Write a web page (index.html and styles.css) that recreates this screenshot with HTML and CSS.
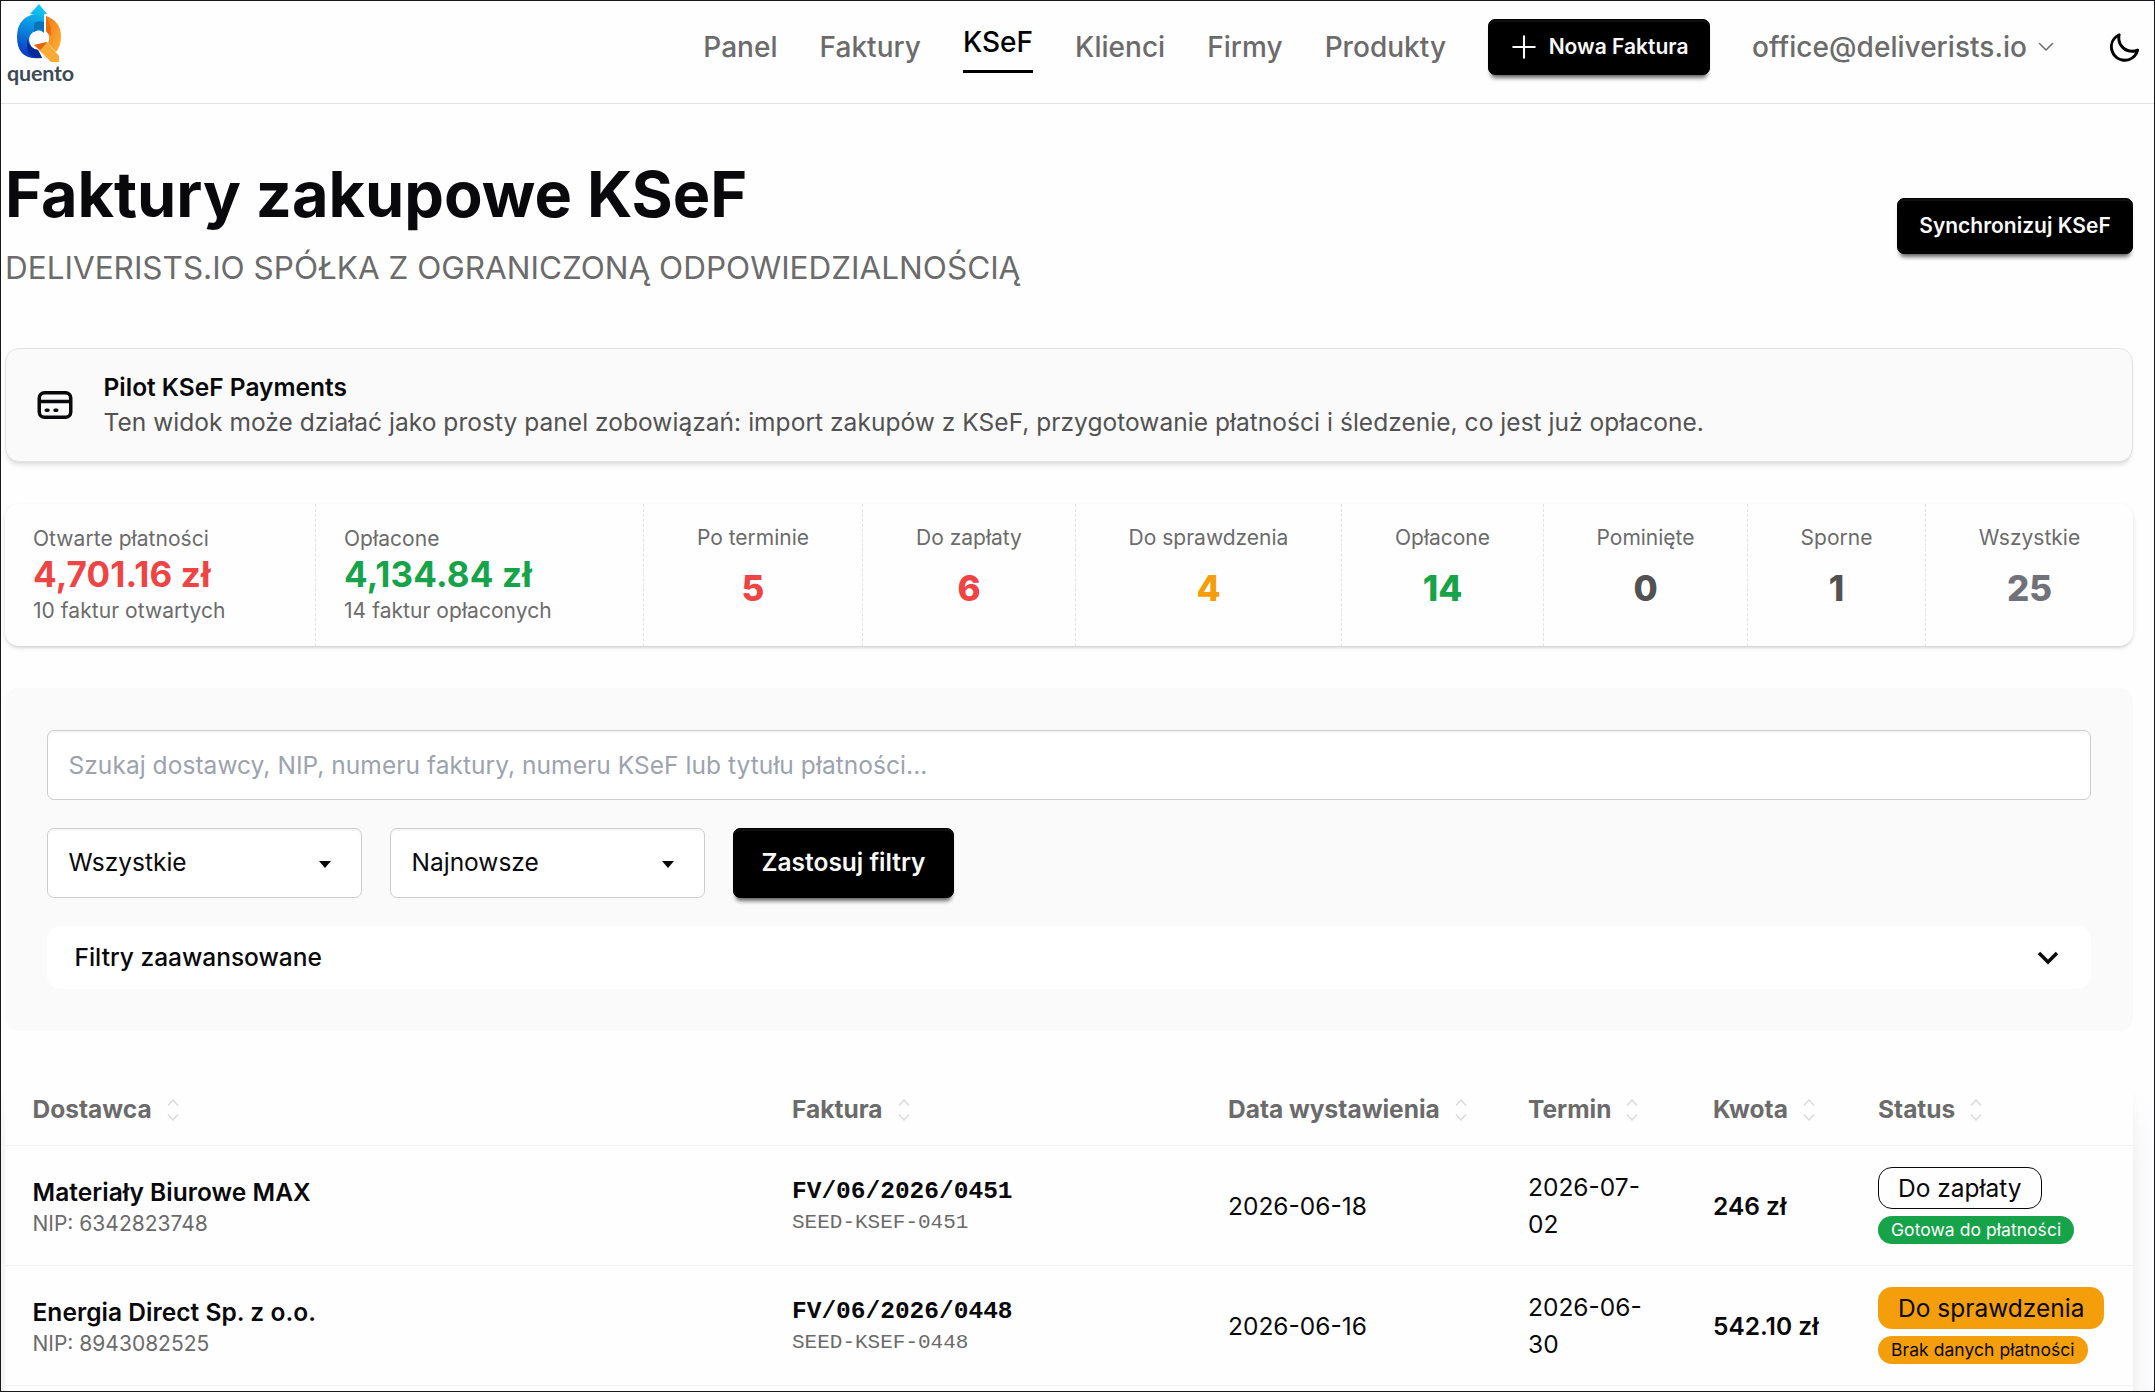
FILE: index.html
```html
<!DOCTYPE html>
<html lang="pl">
<head>
<meta charset="UTF-8">
<meta name="viewport" content="width=device-width, initial-scale=1.0">
<title>Faktury zakupowe KSeF</title>
<link rel="stylesheet" href="styles.css">
</head>
<body>
<div class="page">
<header class="topbar">
<a class="logo" href="#">
<svg width="48" height="60" viewBox="0 0 48 60">
<defs>
<linearGradient id="blue" x1="0.6" y1="0" x2="0.4" y2="1">
<stop offset="0" stop-color="#12cdf5"/>
<stop offset="0.5" stop-color="#0b86dc"/>
<stop offset="1" stop-color="#0a35c4"/>
</linearGradient>
<linearGradient id="orange" x1="0" y1="0" x2="1" y2="1">
<stop offset="0" stop-color="#f47a12"/>
<stop offset="1" stop-color="#fdb137"/>
</linearGradient>
</defs>
<path d="M24 0 32 10 29 10 29 29Q25 25 20 27 14 30 14 36 15 45 23 46L27 54Q2 57 2 33 2 16 16 11L19 10 15 10Z" fill="url(#blue)"/>
<path d="M19 19Q24 16 29 18L29 28Q25 24 19 28Z" fill="#0873b8"/>
<path d="M12 35Q15 45 23 46L27 54Q14 55 12 45Z" fill="#082a96"/>
<path d="M31 12Q46 17 46 33 46 42 41 48L33 39Q36 32 31 27Z" fill="url(#orange)"/>
<path d="M31 12 36 24 36 32 31 27Z" fill="#ea6a0c"/>
<path d="M19 41 32 38 44 52 44 58 36 58Z" fill="#fbaa35"/>
<path d="M19 41 32 38 29 42 25 46Z" fill="#e2640e"/>
</svg>
<span class="logo-name">quento</span>
</a>
<nav class="nav">
<a href="#">Panel</a>
<a href="#">Faktury</a>
<a class="active" href="#">KSeF</a>
<a href="#">Klienci</a>
<a href="#">Firmy</a>
<a href="#">Produkty</a>
<button class="btn btn-new">
<svg width="28" height="28" viewBox="0 0 24 24" fill="none" stroke="currentColor" stroke-width="1.8" stroke-linecap="round"><path d="M12 2.8v18.4M2.8 12h18.4"/></svg>
Nowa Faktura
</button>
<a class="user" href="#">office@deliverists.io
<svg width="16" height="10" viewBox="0 0 16 10" fill="none" stroke="currentColor" stroke-width="1.5" stroke-linecap="round" stroke-linejoin="round"><path d="M1.5 1.5 8 8l6.5-6.5"/></svg>
</a>
<svg class="moon" width="35" height="35" viewBox="0 0 24 24" fill="currentColor"><path d="M21.64 13a1 1 0 0 0-1.05-.14 8.05 8.05 0 0 1-3.37.73 8.15 8.15 0 0 1-8.14-8.1 8.59 8.59 0 0 1 .25-2A1 1 0 0 0 8 2.36a10.14 10.14 0 1 0 14 11.69 1 1 0 0 0-.36-1.05zm-9.5 6.69A8.14 8.14 0 0 1 7.08 5.22v.27a10.15 10.15 0 0 0 10.14 10.14 9.79 9.79 0 0 0 2.1-.22 8.11 8.11 0 0 1-7.18 4.32z"/></svg>
</nav>
</header>

<main class="content">
<section class="heading">
<div>
<h1>Faktury zakupowe KSeF</h1>
<p>DELIVERISTS.IO SPÓŁKA Z OGRANICZONĄ ODPOWIEDZIALNOŚCIĄ</p>
</div>
<button class="btn btn-sync">Synchronizuj KSeF</button>
</section>

<section class="alert">
<svg width="42" height="42" viewBox="0 0 24 24" fill="none" stroke="currentColor" stroke-width="2" stroke-linecap="round" stroke-linejoin="round"><path d="M3 10h18M7 15h1m4 0h1m-7 4h12a3 3 0 003-3V8a3 3 0 00-3-3H6a3 3 0 00-3 3v8a3 3 0 003 3z"/></svg>
<div>
<h3>Pilot KSeF Payments</h3>
<p>Ten widok może działać jako prosty panel zobowiązań: import zakupów z KSeF, przygotowanie płatności i śledzenie, co jest już opłacone.</p>
</div>
</section>

<section class="stats">
<div class="stat sum"><span>Otwarte płatności</span><strong class="red">4,701.16 zł</strong><span>10 faktur otwartych</span></div>
<div class="stat sum"><span>Opłacone</span><strong class="green">4,134.84 zł</strong><span>14 faktur opłaconych</span></div>
<div class="stat"><span>Po terminie</span><strong class="red">5</strong></div>
<div class="stat"><span>Do zapłaty</span><strong class="red">6</strong></div>
<div class="stat"><span>Do sprawdzenia</span><strong class="orange">4</strong></div>
<div class="stat"><span>Opłacone</span><strong class="green">14</strong></div>
<div class="stat"><span>Pominięte</span><strong class="dark">0</strong></div>
<div class="stat"><span>Sporne</span><strong class="dark">1</strong></div>
<div class="stat"><span>Wszystkie</span><strong class="slate">25</strong></div>
</section>

<section class="filters">
<input class="search" type="text" placeholder="Szukaj dostawcy, NIP, numeru faktury, numeru KSeF lub tytułu płatności...">
<div class="filter-row">
<div class="select">Wszystkie<i class="caret"></i></div>
<div class="select">Najnowsze<i class="caret"></i></div>
<button class="btn btn-apply">Zastosuj filtry</button>
</div>
<div class="advanced">Filtry zaawansowane
<svg width="22" height="14" viewBox="0 0 22 14" fill="none" stroke="currentColor" stroke-width="3.5"><path d="M2 2l9 9 9-9"/></svg>
</div>
</section>

<table class="invoices">
<colgroup><col class="c1"><col class="c2"><col class="c3"><col class="c4"><col class="c5"><col></colgroup>
<thead>
<tr>
<th>Dostawca<svg class="sort" viewBox="0 0 12 22"><path d="M1 6.5 6 1l5 5.5M1 15.5 6 21l5-5.5"/></svg></th>
<th>Faktura<svg class="sort" viewBox="0 0 12 22"><path d="M1 6.5 6 1l5 5.5M1 15.5 6 21l5-5.5"/></svg></th>
<th>Data wystawienia<svg class="sort" viewBox="0 0 12 22"><path d="M1 6.5 6 1l5 5.5M1 15.5 6 21l5-5.5"/></svg></th>
<th>Termin<svg class="sort" viewBox="0 0 12 22"><path d="M1 6.5 6 1l5 5.5M1 15.5 6 21l5-5.5"/></svg></th>
<th>Kwota<svg class="sort" viewBox="0 0 12 22"><path d="M1 6.5 6 1l5 5.5M1 15.5 6 21l5-5.5"/></svg></th>
<th>Status<svg class="sort" viewBox="0 0 12 22"><path d="M1 6.5 6 1l5 5.5M1 15.5 6 21l5-5.5"/></svg></th>
</tr>
</thead>
<tbody>
<tr>
<td class="supplier"><div class="name">Materiały Biurowe MAX</div><div class="nip">NIP: 6342823748</div></td>
<td><div class="number">FV/06/2026/0451</div><div class="ksef">SEED-KSEF-0451</div></td>
<td class="issued">2026-06-18</td>
<td>2026-07-<br>02</td>
<td class="amount">246 zł</td>
<td><div class="badges"><span class="badge outline">Do zapłaty</span><span class="badge small success">Gotowa do płatności</span></div></td>
</tr>
<tr>
<td class="supplier"><div class="name">Energia Direct Sp. z o.o.</div><div class="nip">NIP: 8943082525</div></td>
<td><div class="number">FV/06/2026/0448</div><div class="ksef">SEED-KSEF-0448</div></td>
<td class="issued">2026-06-16</td>
<td>2026-06-<br>30</td>
<td class="amount">542.10 zł</td>
<td><div class="badges"><span class="badge warning">Do sprawdzenia</span><span class="badge small warning">Brak danych płatności</span></div></td>
</tr>
<tr class="next"><td colspan="6"></td></tr>
</tbody>
</table>
</main>
</div>
</body>
</html>
```
FILE: styles.css
```css
* {
box-sizing: border-box;
margin: 0;
padding: 0;
}
body {
font-family: Inter, "Liberation Sans", sans-serif;
font-size: 24.5px;
line-height: 35px;
color: #09090b;
background-color: #fefefe;
}
a {
color: inherit;
text-decoration: none;
}
.page {
height: 1392px;
border: 1px solid #18181b;
overflow: hidden;
}

/* top bar */
.topbar {
display: flex;
justify-content: space-between;
height: 103px;
border-bottom: 1px solid #e4e4e4;
}
.logo {
display: flex;
flex-direction: column;
padding: 3px 0 0 6px;
}
.logo svg {
margin-left: 8px;
}
.logo-name {
margin-top: -2px;
font-family: Lato, sans-serif;
font-size: 21.5px;
font-weight: 700;
line-height: 22px;
color: #3d4a55;
letter-spacing: -0.2px;
}
.nav {
display: flex;
align-items: center;
gap: 42px;
padding: 0 12px 10px 0;
font-size: 28px;
font-weight: 500;
line-height: 42px;
letter-spacing: 0.03px;
color: #6b6b6b;
}
.nav .active {
color: #000;
margin-top: -1px;
padding-bottom: 7px;
border-bottom: 3px solid #000;
}
.user {
display: flex;
align-items: center;
gap: 11px;
}
.moon {
color: #000;
margin-left: 11px;
}
.btn {
display: flex;
align-items: center;
justify-content: center;
height: 56px;
padding: 0 21px;
border: 1px solid #000;
border-radius: 7px;
background-color: #000;
color: #fafafa;
font-family: inherit;
font-size: 21px;
font-weight: 600;
box-shadow: inset 0 2px 0 #101010, 0 5px 4px -3px rgba(0, 0, 0, 0.5), 0 7px 5px -4px rgba(0, 0, 0, 0.3);
}
.btn-new {
width: 222px;
padding: 0 0 1px;
gap: 11px;
}
.btn-sync {
width: 236px;
}

/* page heading */
.content {
padding: 55px 21px 0 4px;
}
.heading {
display: flex;
justify-content: space-between;
align-items: center;
margin-bottom: 56px;
}
h1 {
font-size: 63px;
line-height: 70px;
font-weight: 700;
}
.heading p {
margin-top: 14px;
font-size: 31.5px;
line-height: 49px;
color: #6b6b6b;
}

.alert {
display: flex;
align-items: center;
gap: 28px;
height: 114px;
padding: 0 27.5px;
border: 1px solid #e2e2e2;
border-radius: 14px;
background-color: #fafafa;
box-shadow: 0 2px 0 -1px #e0e0e0, 0 5px 5px -2px rgba(0, 0, 0, 0.12);
}
.alert h3 {
font-size: 24.5px;
font-weight: 600;
}
.alert p {
color: #525252;
letter-spacing: 0.042px;
}

/* counters */
.stats {
display: grid;
grid-template-columns: 311px 328px 219px 213px 266px 202px 204px 178px 1fr;
height: 142px;
margin: 42px 0;
border-radius: 14px;
background-color: #fefefe;
box-shadow: 0 2px 5px rgba(0, 0, 0, 0.1), 0 2px 3px -1px rgba(0, 0, 0, 0.12);
}
.stat {
display: flex;
flex-direction: column;
align-items: center;
padding-top: 20px;
border-right: 1px dashed #e2e2e2;
font-size: 21px;
line-height: 28px;
color: #6b6b6b;
}
.stat:last-child {
border-right: 0;
}
.stat strong {
margin-top: 12px;
font-size: 35px;
line-height: 49px;
font-weight: 800;
}
.stat.sum {
align-items: flex-start;
padding-top: 21px;
padding-left: 28px;
letter-spacing: 0.05px;
}
.stat.sum strong {
margin: -1px 0 1px;
line-height: 44px;
font-weight: 700;
letter-spacing: 0.15px;
}
.red { color: #ef4444; }
.green { color: #16a34a; }
.orange { color: #f59e0b; }
.dark { color: #525252; }
.slate { color: #71717a; }

/* filters */
.filters {
padding: 42px;
border-radius: 14px;
background-color: #fafafa;
}
.search,
.select {
height: 70px;
padding: 0 20.5px;
border: 1px solid #cdcdcd;
border-radius: 7px;
background-color: #fff;
box-shadow: inset 0 2px 1px #f7f7f7;
}
.search {
display: block;
width: 100%;
font-family: inherit;
font-size: 24.5px;
letter-spacing: 0.05px;
}
.search::placeholder {
color: #9ca3af;
}
.filter-row {
display: flex;
gap: 28px;
margin: 28px 0;
}
.select {
display: flex;
align-items: center;
justify-content: space-between;
width: 315px;
padding-right: 30px;
padding-bottom: 1px;
}
.caret {
margin-top: 4px;
border: 6.5px solid transparent;
border-top: 7px solid #09090b;
border-bottom: 0;
}
.btn-apply {
width: 221px;
height: 70px;
padding: 0 0 2px;
font-size: 24.5px;
}
.advanced {
display: flex;
align-items: center;
justify-content: space-between;
height: 63px;
padding: 0 32px 0 27.5px;
border-radius: 14px;
background-color: #fff;
font-weight: 500;
}

/* invoice table */
.invoices {
table-layout: fixed;
width: 2128px;
margin-top: 42px;
border-collapse: separate;
border-spacing: 0;
border-radius: 14px;
background-color: #fefefe;
box-shadow: 0 35px 44px -9px rgba(0, 0, 0, 0.1), 0 14px 18px -10px rgba(0, 0, 0, 0.1);
}
.c1 { width: 759px; }
.c2 { width: 436px; }
.c3 { width: 300px; }
.c4 { width: 185px; }
.c5 { width: 165px; }
th,
td {
padding: 0 0 0 28px;
border-bottom: 1px solid #f0f0f0;
text-align: left;
line-height: 37px;
vertical-align: middle;
}
th {
height: 73px;
font-weight: 700;
color: #6b6b6b;
}
td {
height: 120px;
}
td.supplier,
td.issued,
td.amount {
padding-top: 2px;
}
.supplier,
th:first-child {
padding-left: 27.5px;
}
.next td {
height: 200px;
}
.sort {
width: 12px;
height: 22px;
margin-left: 15px;
vertical-align: -3px;
fill: none;
stroke: #d9d9d9;
stroke-width: 1.3;
}
.name {
font-weight: 600;
line-height: 35px;
letter-spacing: 0.04px;
}
.nip {
font-size: 21px;
line-height: 28px;
color: #6b6b6b;
}
.number {
font-family: "Liberation Mono", monospace;
font-weight: 700;
line-height: 35px;
}
.ksef {
font-family: "Liberation Mono", monospace;
font-size: 21px;
line-height: 28px;
color: #6b6b6b;
}
.amount {
font-weight: 600;
}
.badges {
display: flex;
flex-direction: column;
align-items: flex-start;
gap: 7px;
}
.badge {
height: 42px;
padding: 0 19px;
border: 1px solid transparent;
border-radius: 14px;
line-height: 40px;
white-space: nowrap;
}
.badge.small {
height: 28px;
padding: 0 12px;
font-size: 17.5px;
line-height: 26px;
letter-spacing: 0.05px;
}
.outline {
border-color: #09090b;
}
.success {
background-color: #16a34a;
color: #fff;
}
.warning {
background-color: #f59e0b;
color: #09090b;
}
```
